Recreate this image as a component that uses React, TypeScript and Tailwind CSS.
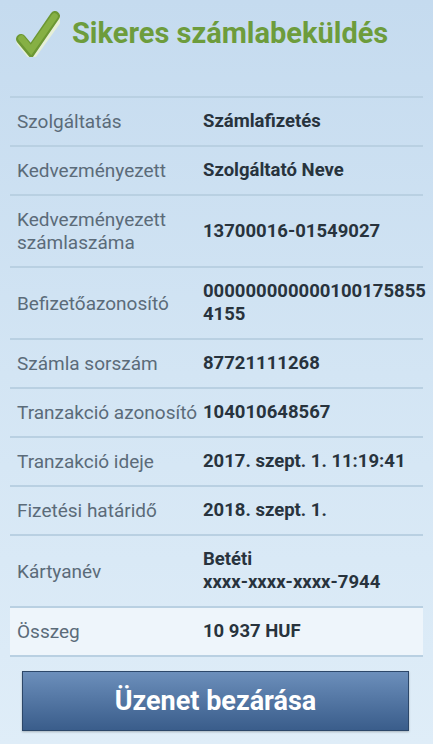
import React from 'react'

const rows: { label: string[]; value: string[]; highlight?: boolean }[] = [
  { label: ['Szolgáltatás'], value: ['Számlafizetés'] },
  { label: ['Kedvezményezett'], value: ['Szolgáltató Neve'] },
  { label: ['Kedvezményezett', 'számlaszáma'], value: ['13700016-01549027'] },
  { label: ['Befizetőazonosító'], value: ['000000000000100175855', '4155'] },
  { label: ['Számla sorszám'], value: ['87721111268'] },
  { label: ['Tranzakció azonosító'], value: ['104010648567'] },
  { label: ['Tranzakció ideje'], value: ['2017. szept. 1. 11:19:41'] },
  { label: ['Fizetési határidő'], value: ['2018. szept. 1.'] },
  { label: ['Kártyanév'], value: ['Betéti', 'xxxx-xxxx-xxxx-7944'] },
  { label: ['Összeg'], value: ['10 937 HUF'], highlight: true },
]

function CheckMark() {
  return (
    <svg width="44" height="46" viewBox="0 0 44 46" className="shrink-0">
      <path d="M5 29 L15 41 L40 6" fill="none" stroke="#e6efd8" strokeWidth="11" strokeLinecap="round" strokeLinejoin="round" transform="translate(0.8,1.4)" />
      <path d="M5 28 L15 40 L39 5" fill="none" stroke="#6c9733" strokeWidth="10" strokeLinecap="round" strokeLinejoin="miter" />
      <path d="M5.5 27.5 L15 39 L38.5 5.5" fill="none" stroke="#86b044" strokeWidth="6.5" strokeLinecap="round" strokeLinejoin="miter" />
    </svg>
  )
}

export default function App() {
  return (
    <div
      className="w-[433px] h-[744px] overflow-hidden bg-gradient-to-b from-[#c5dbef] via-[#d3e5f4] to-[#dfedf8]"
      style={{ fontFamily: 'Roboto, "Noto Sans", sans-serif' }}
    >
      {/* Header */}
      <div className="flex items-center h-[66px] pl-[16px] pt-[2px]">
        <CheckMark />
        <h1 className="ml-[12px] text-[29px] font-bold text-[#6d9c3c]">
          Sikeres számlabeküldés
        </h1>
      </div>

      {/* Details */}
      <div className="mt-[30px] mx-[10px] border-b-2 border-[#b9d0e2]">
        {rows.map((row, i) => (
          <div
            key={i}
            className={`grid grid-cols-[186px_1fr] items-center border-t-2 border-[#b9d0e2] py-[12px] pl-[7px] ${
              row.highlight ? 'bg-[#eef5fb]' : ''
            }`}
          >
            <div className="text-[19px] leading-[23px] text-[#5b6b79] whitespace-nowrap">
              {row.label.map((l, j) => (
                <div key={j}>{l}</div>
              ))}
            </div>
            <div className="text-[18.5px] leading-[23px] font-bold text-[#28333d] whitespace-nowrap">
              {row.value.map((v, j) => (
                <div key={j}>{v}</div>
              ))}
            </div>
          </div>
        ))}
      </div>

      {/* Button */}
      <div className="px-[22px] pt-[14px]">
        <button className="w-[387px] h-[60px] border border-[#2c4769] bg-gradient-to-b from-[#6c8fbb] to-[#3a5d8b] text-white text-[27px] font-bold shadow-[0_1px_2px_rgba(0,0,0,0.25)]">
          Üzenet bezárása
        </button>
      </div>
    </div>
  )
}
